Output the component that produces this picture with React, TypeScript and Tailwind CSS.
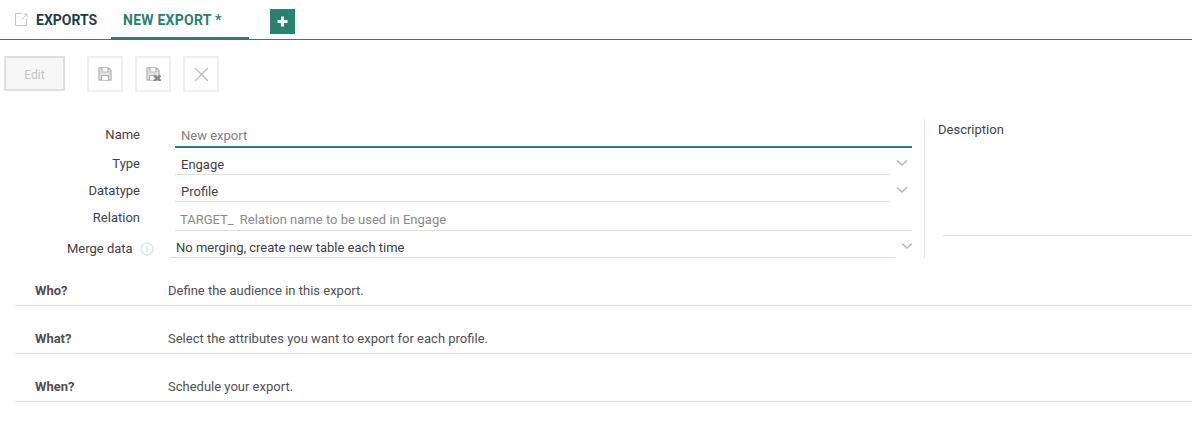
import React from "react";

const Chevron = () => (
  <svg width="12" height="8" viewBox="0 0 12 8" fill="none" stroke="#b5b5b5" strokeWidth="1.6">
    <path d="M1 1.5 L6 6 L11 1.5" />
  </svg>
);

const FormLabel = ({ children, className = "" }: { children: React.ReactNode; className?: string }) => (
  <div className={"w-[140px] shrink-0 text-right text-[13px] leading-[16px] text-[#3f3f46] " + className}>{children}</div>
);

const SaveIcon = ({ x }: { x?: boolean }) => (
  <svg width="15" height="14" viewBox="0 0 15 14" fill="none">
    <path d="M1 1 H10.5 L13 3.5 V13 H1 Z" stroke="#b4b4b4" strokeWidth="1.3" fill="#e4e4e4" />
    <path d="M4 1 V5 H10 V1" stroke="#b4b4b4" strokeWidth="1.2" fill="#fff" />
    <path d="M3.5 13 V8.5 H10.5 V13" stroke="#b4b4b4" strokeWidth="1.2" fill="#fff" />
    {x && <path d="M8 8.5 L14.5 14 M14.5 8.5 L8 14" stroke="#8a8a8a" strokeWidth="2.4" />}
  </svg>
);

const IconBtn = ({ children }: { children: React.ReactNode }) => (
  <div className="flex h-[36px] w-[36px] items-center justify-center border-2 border-[#f0f0f0] bg-white">{children}</div>
);

const Section = ({ title, text }: { title: string; text: string }) => (
  <div className="ml-[15px] flex h-[48px] items-end border-b border-[#e0e0e0] pb-[6px] text-[13px] leading-[16px] text-[#505050]">
    <div className="w-[153px] shrink-0 pl-[20px] font-bold">{title}</div>
    <div>{text}</div>
  </div>
);

export default function App() {
  return (
    <div className="h-[432px] w-[1192px] overflow-hidden bg-white font-['Roboto',sans-serif]">
      <div className="flex h-[40px] items-start border-b border-[#2f7f70]">
        <div className="flex h-[39px] w-[111px] items-center pl-[15px] pt-[1px]">
          <svg width="13" height="13" viewBox="0 0 13 13" fill="none" stroke="#c4c4c4" strokeWidth="1" className="mb-[1px] mr-[8px]">
            <path d="M7 0.5 H0.5 V12.5 H11.5 V6" />
            <path d="M6.5 6.5 L11.5 1.5 M8.5 1 H12 V4.5" />
          </svg>
          <span className="text-[14px] font-bold tracking-[0px] text-[#1f3f46]">EXPORTS</span>
        </div>
        <div className="flex h-[39px] w-[138px] items-center border-b-[2px] border-[#2b8070] pl-[12px] pt-[3px] text-[14px] font-bold tracking-[0.25px] text-[#2b8070]">
          NEW EXPORT *
        </div>
        <div className="ml-[21px] mt-[9px] flex h-[25px] w-[25px] items-center justify-center bg-[#2b8070]">
          <svg width="11" height="11" viewBox="0 0 11 11" fill="#fff">
            <path d="M4 0.5 H7 V4 H10.5 V7 H7 V10.5 H4 V7 H0.5 V4 H4 Z" />
          </svg>
        </div>
      </div>

      <div className="flex items-start pl-[4px] pt-[16px]">
        <div className="flex h-[35px] w-[61px] items-center justify-center border-2 border-[#e0e0e0] bg-[#f7f7f7] pt-[2px] text-[12px] text-[#c4c4c4]">
          Edit
        </div>
        <div className="ml-[22px] flex gap-[12px]">
          <IconBtn><SaveIcon /></IconBtn>
          <IconBtn><SaveIcon x /></IconBtn>
          <IconBtn>
            <svg width="15" height="15" viewBox="0 0 15 15" stroke="#bdbdbd" strokeWidth="1.4">
              <path d="M1 1 L14 14 M14 1 L1 14" />
            </svg>
          </IconBtn>
        </div>
      </div>

      <div className="mt-[27px] flex h-[139px] items-stretch">
        <div className="w-[925px] shrink-0 border-r border-[#e6e6e6]">
          <div className="flex h-[29px] items-start">
            <FormLabel className="pt-[8px]">Name</FormLabel>
            <div className="ml-[35px] flex h-[29px] w-[737px] items-center border-b-2 border-[#2b8070] pl-[6px] pt-[7px] text-[13px] text-[#808080]">New export</div>
          </div>
          <div className="flex h-[27px] items-start">
            <FormLabel className="pt-[8px]">Type</FormLabel>
            <div className="ml-[35px] flex h-[27px] w-[715px] items-center border-b border-[#dedede] pl-[6px] pt-[7px] text-[13px] text-[#3f3f46]">Engage</div>
            <div className="ml-[6px] pt-[11px]"><Chevron /></div>
          </div>
          <div className="flex h-[27px] items-start">
            <FormLabel className="pt-[8px]">Datatype</FormLabel>
            <div className="ml-[35px] flex h-[27px] w-[715px] items-center border-b border-[#dedede] pl-[6px] pt-[7px] text-[13px] text-[#3f3f46]">Profile</div>
            <div className="ml-[6px] pt-[11px]"><Chevron /></div>
          </div>
          <div className="flex h-[29px] items-start">
            <FormLabel className="pt-[8px]">Relation</FormLabel>
            <div className="ml-[35px] flex h-[29px] w-[737px] items-center border-b border-[#dedede] pl-[5px] pt-[7px] text-[13px] text-[#8a8a8a]">
              <span className="mr-[6px]">TARGET_</span>Relation name to be used in Engage
            </div>
          </div>
          <div className="flex h-[27px] items-start">
            <div className="flex w-[170px] shrink-0 items-center pl-[67px] pt-[10px] text-[13px] leading-[16px] text-[#3f3f46]">
              Merge data
              <svg width="14" height="14" viewBox="0 0 14 14" fill="none" className="ml-[7px]">
                <circle cx="7" cy="7" r="6" stroke="#d5ece6" strokeWidth="1.5" />
                <path d="M7 4 V10" stroke="#d5ece6" strokeWidth="1.5" />
              </svg>
            </div>
            <div className="flex h-[27px] w-[725px] items-center border-b border-[#dedede] pl-[6px] pt-[7px] text-[13px] text-[#3f3f46]">No merging, create new table each time</div>
            <div className="ml-[6px] pt-[11px]"><Chevron /></div>
          </div>
        </div>
        <div className="flex flex-1 flex-col pl-[13px]">
          <div className="pt-[3px] text-[13px] leading-[16px] text-[#3f3f46]">Description</div>
          <div className="ml-[5px] mt-[97px] border-b border-[#dedede]"></div>
        </div>
      </div>

      <div>
        <Section title="Who?" text="Define the audience in this export." />
        <Section title="What?" text="Select the attributes you want to export for each profile." />
        <Section title="When?" text="Schedule your export." />
      </div>
    </div>
  );
}
